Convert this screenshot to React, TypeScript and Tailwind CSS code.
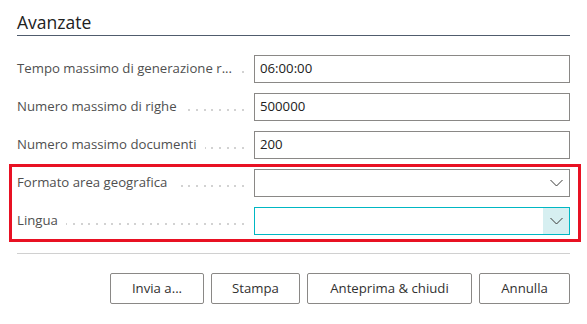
import React from "react";

const FONT = { fontFamily: '"Open Sans", "Segoe UI", sans-serif' };

function Leader() {
  return (
    <div className="flex-1 min-w-[4px] ml-[8px] flex justify-end items-center overflow-hidden gap-[5.7px] translate-y-[3px]">
      {Array.from({ length: 40 }).map((_, i) => (
        <span key={i} className="shrink-0 w-[2px] h-[2px] bg-[#d2d2d2]" />
      ))}
    </div>
  );
}

function Chevron() {
  return (
    <svg width="13" height="8" viewBox="0 0 13 8" fill="none">
      <path d="M0.5 1 L6.5 7 L12.5 1" stroke="#3b3a39" strokeWidth="1" />
    </svg>
  );
}

function Row({ label, children }: { label: string; children: React.ReactNode }) {
  return (
    <div className="flex items-center h-[28px]">
      <div className="w-[227px] flex items-center shrink-0">
        <span className="text-[13.2px] text-[#4f4f4f] whitespace-nowrap">{label}</span>
        <Leader />
      </div>
      <div className="w-[10px] shrink-0" />
      <div className="flex-1 h-full">{children}</div>
    </div>
  );
}

function TextBox({ value }: { value: string }) {
  return (
    <div className="h-full border border-[#8a8886] flex items-center pl-[5px] text-[13.2px] text-[#212121]">
      {value}
    </div>
  );
}

function Select({ focused }: { focused?: boolean }) {
  return (
    <div
      className={
        "h-full flex items-stretch border " +
        (focused ? "border-[#00b7c3]" : "border-[#8a8886]")
      }
    >
      <div className="flex-1" />
      <div
        className={
          "w-[26px] flex items-center justify-center " + (focused ? "bg-[#d6eff1]" : "")
        }
      >
        <Chevron />
      </div>
    </div>
  );
}

function Btn({ label, w }: { label: string; w: string }) {
  return (
    <button
      className={
        "h-[31px] border border-[#8a8886] rounded-[2px] bg-white text-[13.2px] text-[#323130] flex items-center justify-center " +
        w
      }
    >
      {label}
    </button>
  );
}

export default function App() {
  return (
    <div className="relative w-[587px] h-[324px] bg-white overflow-hidden" style={FONT}>
      <div className="pl-[17px] pr-[17px]">
        <div className="h-[36px] flex items-end pb-[4px] border-b border-[#505c6d]">
          <span className="text-[17.5px] text-[#212121] leading-none">Avanzate</span>
        </div>
        <div className="pt-[19px] flex flex-col gap-[10px]">
          <Row label="Tempo massimo di generazione r...">
            <TextBox value="06:00:00" />
          </Row>
          <Row label="Numero massimo di righe">
            <TextBox value="500000" />
          </Row>
          <Row label="Numero massimo documenti">
            <TextBox value="200" />
          </Row>
          <Row label="Formato area geografica">
            <Select />
          </Row>
          <Row label="Lingua">
            <Select focused />
          </Row>
        </div>
        <div className="mt-[18px] border-t border-[#d0d0d0]" />
        <div className="mt-[19px] flex justify-end gap-[7px]">
          <Btn label="Invia a..." w="w-[94px]" />
          <Btn label="Stampa" w="w-[89px]" />
          <Btn label="Anteprima & chiudi" w="w-[165px]" />
          <Btn label="Annulla" w="w-[91px]" />
        </div>
      </div>
      <div className="absolute left-[9px] top-[164px] w-[572px] h-[78px] border-[3px] border-[#e81123] pointer-events-none" />
    </div>
  );
}
